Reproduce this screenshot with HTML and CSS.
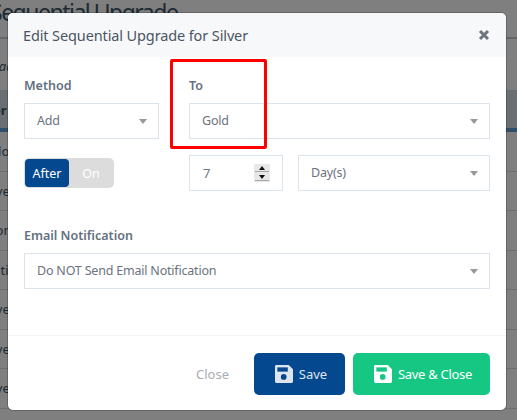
FILE: index.html
```html
<!DOCTYPE html>
<html lang="en">
<head>
<meta charset="utf-8">
<title>Edit Sequential Upgrade</title>
<link rel="stylesheet" href="styles.css">
</head>
<body>
<div class="page">
  <h1 class="page-title">Sequential Upgrade</h1>
  <div class="page-note">Upgrade</div>
  <div class="table-head">Member</div>
  <div class="table-row">Color</div>
  <div class="table-row">Silver</div>
  <div class="table-row">Bronze</div>
  <div class="table-row">Platinum</div>
  <div class="table-row">Silver</div>
  <div class="table-row">Silver</div>
  <div class="table-row">Silver</div>
</div>
<div class="overlay">
  <div class="modal">
    <header class="modal-header">
      <h2 class="modal-title">Edit Sequential Upgrade for Silver</h2>
      <svg class="close-x" viewBox="0 0 12 12" aria-hidden="true"><path d="M2 2l8 8M10 2l-8 8"/></svg>
    </header>
    <div class="modal-body">
      <div class="row row-top">
        <div class="field f-method">
          <label class="label">Method</label>
          <div class="select">Add</div>
        </div>
        <div class="field f-to">
          <label class="label">To</label>
          <div class="select">Gold</div>
        </div>
      </div>
      <div class="row row-second">
        <div class="switch f-method">
          <span class="switch-on">After</span>
          <span class="switch-off">On</span>
        </div>
        <div class="number">
          <span>7</span>
          <span class="spinner"><span class="spin-part"><i class="up"></i></span><span class="spin-part"><i class="down"></i></span></span>
        </div>
        <div class="select f-unit">Day(s)</div>
      </div>
      <div class="field f-email">
        <label class="label">Email Notification</label>
        <div class="select">Do NOT Send Email Notification</div>
      </div>
    </div>
    <footer class="modal-footer">
      <span class="btn-close">Close</span>
      <span class="btn btn-save">
        <svg class="floppy" viewBox="0 0 19 19" aria-hidden="true"><path class="disk" fill-rule="evenodd" d="M1.500 0H14.500L19 4.500V17.500A1.500 1.500 0 0 1 17.500 19H1.500A1.500 1.500 0 0 1 0 17.500V1.500A1.500 1.500 0 0 1 1.500 0Z"/><rect class="hole" x="2.500" y="2.500" width="11" height="4.500"/><circle class="hole" cx="9.200" cy="12.600" r="3"/></svg>
        <span>Save</span>
      </span>
      <span class="btn btn-save-close">
        <svg class="floppy" viewBox="0 0 19 19" aria-hidden="true"><path class="disk" fill-rule="evenodd" d="M1.500 0H14.500L19 4.500V17.500A1.500 1.500 0 0 1 17.500 19H1.500A1.500 1.500 0 0 1 0 17.500V1.500A1.500 1.500 0 0 1 1.500 0Z"/><rect class="hole" x="2.500" y="2.500" width="11" height="4.500"/><circle class="hole" cx="9.200" cy="12.600" r="3"/></svg>
        <span>Save &amp; Close</span>
      </span>
    </footer>
  </div>
  <div class="highlight"></div>
</div>
</body>
</html>
```
FILE: styles.css
```css
* { box-sizing: border-box; }
html, body { margin: 0; height: 100%; }
body {
  width: 517px;
  height: 420px;
  overflow: hidden;
  position: relative;
  background: #fff;
  font-family: "Noto Sans", "Open Sans", sans-serif;
  font-size: 13px;
  color: #5f6670;
}
.page { height: 420px; overflow: hidden; color: #3d5566; }
.page-title { margin: 0 0 0 -10px; font-size: 23px; letter-spacing: -1.500px; font-weight: 400; line-height: 24px; height: 39px; border-bottom: 2px solid #ccc; white-space: nowrap; }
.page-note { font-style: italic; height: 51px; line-height: 54px; margin-left: -30px; }
.table-head { height: 42px; line-height: 40px; background: #d2dfe6; border-bottom: 4px solid #5e9ed6; font-weight: 700; margin-left: -48px; }
.table-row { height: 39.500px; line-height: 38px; border-bottom: 1px solid #ddd; margin-left: -18px; }
.overlay { position: absolute; inset: 0; background: rgba(0, 0, 0, .5); }
.modal { position: absolute; left: 8px; top: 13px; width: 498px; height: 397px; background: #fff; border-radius: 5px; display: flex; flex-direction: column; overflow: hidden; box-shadow: 0 0 0 1px rgba(0, 0, 0, .2); }
.modal-header { height: 44px; flex: none; background: #f7f8fa; display: flex; align-items: center; justify-content: space-between; padding: 0 16px 0 15px; }
.modal-title { margin: 0; font-size: 14.500px; letter-spacing: -.12px; font-weight: 400; color: #4b5563; }
.close-x { width: 12px; height: 12px; fill: none; stroke: #6c757d; stroke-width: 3; }
.modal-body { flex: 1; padding: 0 16px; }
.row { display: flex; }
.row-top { padding-top: 19px; gap: 30px; }
.f-method { width: 135px; flex: none; }
.f-to { width: 301px; flex: none; }
.label { display: block; font-weight: 600; font-size: 12.500px; color: #64707f; height: 27px; line-height: 20px; }
.select {
  height: 36px;
  border: 1px solid #dbe3ec;
  padding: 0 12px 2px;
  display: flex;
  align-items: center;
  position: relative;
  font-size: 12.500px;
  letter-spacing: -.2px;
  color: #6b7280;
}
.select::after {
  content: "";
  position: absolute;
  right: 11px;
  top: 15px;
  border: 4px solid transparent;
  border-top: 5px solid #999;
  border-bottom: 0;
}
.row-second { margin-top: 16px; align-items: center; }
.switch { height: 30px; display: flex; background: #dcdcdc; border-radius: 5px; width: 90px; flex: none; padding: 1px; font-size: 12.500px; margin-right: 75px; }
.switch-on { width: 44px; background: #04498f; color: #fff; border-radius: 4px; display: flex; align-items: center; justify-content: center; }
.switch-off { flex: 1; color: #fff; display: flex; align-items: center; justify-content: center; }
.number { width: 94px; height: 36px; border: 1px solid #dbe3ec; flex: none; display: flex; align-items: center; justify-content: space-between; padding: 0 12px 0 13px; margin-right: 15px; color: #6b7280; }
.spinner { width: 16px; height: 18px; background: #e8e8e8; display: flex; flex-direction: column; gap: 2px; padding: 1px; }
.spin-part { flex: 1; background: #e8e8e8; border-bottom: 1px solid #a8a8a8; display: flex; align-items: center; justify-content: center; }
.spinner i { display: block; border: 3.500px solid transparent; }
.spinner .up { border-top: 0; border-bottom: 4px solid #111; }
.spinner .down { border-bottom: 0; border-top: 4px solid #111; }
.f-unit { flex: 1; }
.f-email { margin-top: 35px; }
.modal-footer { height: 75px; flex: none; border-top: 1px solid #f2f3f5; display: flex; align-items: center; justify-content: flex-end; padding: 1px 16px 0; }
.btn-close { color: #a8adb3; margin-right: 25px; }
.btn { height: 42px; border-radius: 5px; color: #fff; display: flex; align-items: center; justify-content: center; gap: 6px; padding-left: 3px; }
.btn-save { width: 91px; background: #04498f; margin-right: 8px; color: #dde5ef; --hole: #04498f; }
.btn-save-close { width: 137px; background: #16c784; letter-spacing: -.3px; --hole: #16c784; }
.floppy { width: 18px; height: 18px; flex: none; }
.disk { fill: currentColor; }
.hole { fill: var(--hole); }
.highlight { position: absolute; left: 170px; top: 59px; width: 97px; height: 90px; border: 3px solid #f00; border-radius: 2px; }
```
